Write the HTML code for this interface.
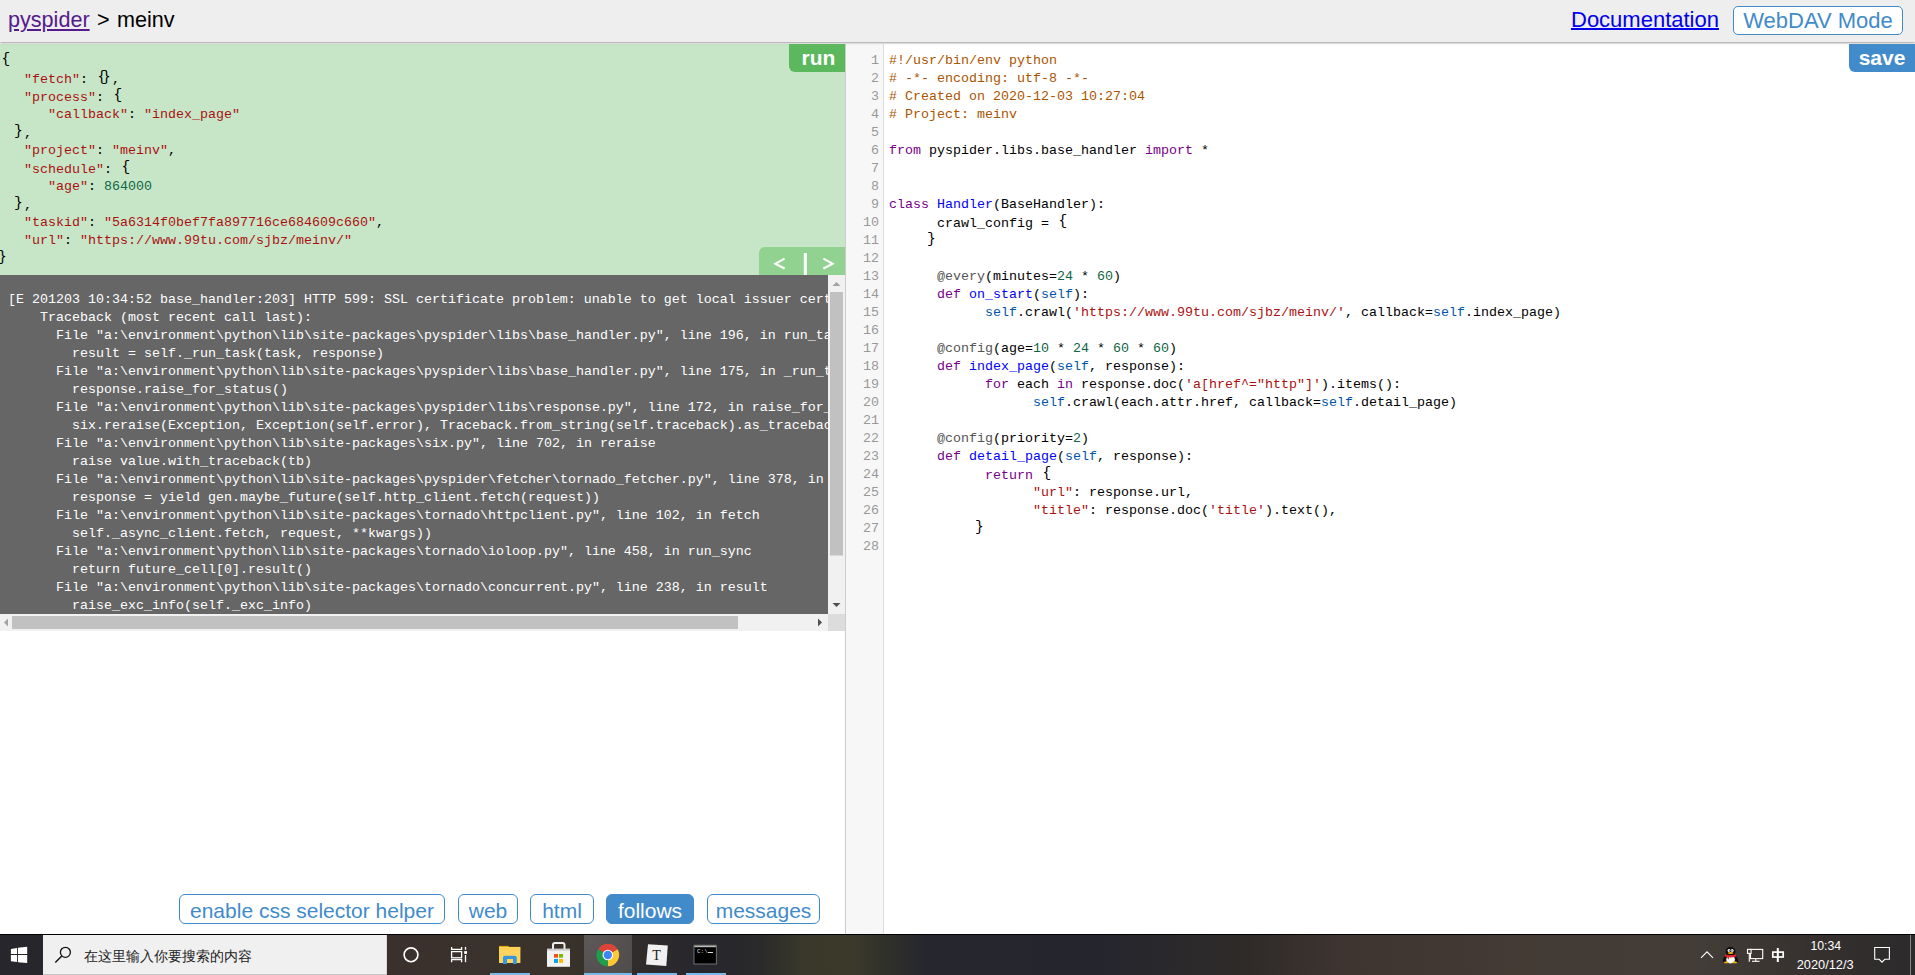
<!DOCTYPE html>
<html><head><meta charset="utf-8">
<style>
*{box-sizing:border-box}
html,body{margin:0;padding:0;width:1915px;height:975px;overflow:hidden;background:#fff;font-family:"Liberation Sans",sans-serif}
#hdr{position:absolute;left:0;top:0;width:1915px;height:42px;background:#eee;box-shadow:0 1px 2px #999;z-index:5}
#hdr .crumb{position:absolute;top:7px;font-size:21.6px;line-height:26px;color:#000;white-space:pre}
#hdr .crumb a{color:#551a8b;text-decoration:underline}
#doc{position:absolute;left:1571px;top:7px;font-size:22px;line-height:26px;color:#00e;text-decoration:underline;text-underline-offset:1px}
#webdav{position:absolute;left:1733px;top:6px;width:170px;height:29px;border:1px solid #428bca;border-radius:5px;background:#fff;color:#428bca;font-size:22px;line-height:28px;text-align:center}
#left{position:absolute;left:0;top:44px;width:845px;height:890px;background:#fff;overflow:hidden}
#task{position:absolute;left:0;top:0;width:845px;height:231px;background:#c7e6c7;overflow:hidden}
.ln{position:absolute;font-family:"Liberation Mono",monospace;font-size:13.333px;letter-spacing:0px;line-height:18px;white-space:pre;height:18px}
#run{position:absolute;right:0;top:0;width:56px;padding-left:3px;height:28px;background:#5cb85c;border-bottom-left-radius:6px;color:#fff;font-weight:bold;font-size:21px;line-height:27px;text-align:center}
#nav{position:absolute;left:759px;top:203px;width:86px;height:28px;background:#91d291;border-top-left-radius:6px;color:#fff;font-size:21px}
#log{position:absolute;left:0;top:231px;width:828px;height:339px;background:#666;color:#fff;overflow:hidden}
#vs{position:absolute;left:828px;top:231px;width:17px;height:339px;background:#f1f1f1}
#hs{position:absolute;left:0;top:570px;width:828px;height:17px;background:#f1f1f1}
#corner{position:absolute;left:828px;top:570px;width:17px;height:17px;background:#dcdcdc}
#divider{position:absolute;left:845px;top:44px;width:1px;height:890px;background:#ccc}
#right{position:absolute;left:846px;top:44px;width:1069px;height:890px;background:#fff;overflow:hidden}
#gutter{position:absolute;left:0;top:0;width:38px;height:890px;background:#f7f7f7;border-right:1px solid #ddd}
#save{position:absolute;right:0;top:0;width:66px;height:28px;background:#428bca;border-bottom-left-radius:6px;color:#fff;font-weight:bold;font-size:21px;line-height:27px;text-align:center}
#taskbar{position:absolute;left:0;top:934px;width:1915px;height:41px;background:#3b3529;border-top:1px solid #000;overflow:hidden}
.btn{position:absolute;top:894px;height:30px;border:1px solid #428bca;border-radius:6px;color:#428bca;font-size:21px;line-height:32px;text-align:center;background:#fff}
.btn.on{background:#428bca;color:#fff}
.cm{color:#a50}.kw{color:#708}.df{color:#00f}.v2{color:#05a}.st{color:#a11}.nu{color:#164}.me{color:#555}
.bo,.bc{display:inline-block;width:8px;font-size:14.5px;position:relative;top:-1.5px;text-indent:0}.bo{text-indent:1.5px}.bc{text-indent:-2px}
.gn{color:#999;text-align:right;width:33px}
</style></head><body>
<div id="hdr">
  <div class="crumb" style="left:8px"><a>pyspider</a></div><div class="crumb" style="left:97px">&gt;</div><div class="crumb" style="left:117px">meinv</div>
  <div id="doc">Documentation</div>
  <div id="webdav">WebDAV Mode</div>
</div>
<div id="left">
  <div id="task"><div class="ln" style="left:0px;top:7.5px"><span class="bo">{</span></div><div class="ln" style="left:24px;top:25.5px"><span class="st">&quot;fetch&quot;</span>: <span class="bo">{</span><span class="bc">}</span>,</div><div class="ln" style="left:24px;top:43.5px"><span class="st">&quot;process&quot;</span>: <span class="bo">{</span></div><div class="ln" style="left:48px;top:61.5px"><span class="st">&quot;callback&quot;</span>: <span class="st">&quot;index_page&quot;</span></div><div class="ln" style="left:16px;top:79.5px"><span class="bc">}</span>,</div><div class="ln" style="left:24px;top:97.5px"><span class="st">&quot;project&quot;</span>: <span class="st">&quot;meinv&quot;</span>,</div><div class="ln" style="left:24px;top:115.5px"><span class="st">&quot;schedule&quot;</span>: <span class="bo">{</span></div><div class="ln" style="left:48px;top:133.5px"><span class="st">&quot;age&quot;</span>: <span class="nu">864000</span></div><div class="ln" style="left:16px;top:151.5px"><span class="bc">}</span>,</div><div class="ln" style="left:24px;top:169.5px"><span class="st">&quot;taskid&quot;</span>: <span class="st">&quot;5a6314f0bef7fa897716ce684609c660&quot;</span>,</div><div class="ln" style="left:24px;top:187.5px"><span class="st">&quot;url&quot;</span>: <span class="st">&quot;https://www.99tu.com/sjbz/meinv/&quot;</span></div><div class="ln" style="left:0px;top:205.5px"><span class="bc">}</span></div></div>
  <div id="run">run</div>
  <div id="nav"></div>
  <svg width="845" height="240" style="position:absolute;left:0;top:0">
  <path d="M784.6,214.7 L775.3,219.8 L784.6,224.5" fill="none" stroke="#fff" stroke-width="2" stroke-linejoin="miter"/>
  <rect x="803.8" y="209" width="3" height="22" fill="#fff"/>
  <path d="M823.4,214.7 L832.7,219.8 L823.4,224.5" fill="none" stroke="#fff" stroke-width="2" stroke-linejoin="miter"/>
  </svg>
  <div id="log"><div class="ln" style="left:8px;top:15.5px">[E 201203 10:34:52 base_handler:203] HTTP 599: SSL certificate problem: unable to get local issuer certificate</div><div class="ln" style="left:40px;top:33.5px">Traceback (most recent call last):</div><div class="ln" style="left:56px;top:51.5px">File &quot;a:\environment\python\lib\site-packages\pyspider\libs\base_handler.py&quot;, line 196, in run_task</div><div class="ln" style="left:72px;top:69.5px">result = self._run_task(task, response)</div><div class="ln" style="left:56px;top:87.5px">File &quot;a:\environment\python\lib\site-packages\pyspider\libs\base_handler.py&quot;, line 175, in _run_task</div><div class="ln" style="left:72px;top:105.5px">response.raise_for_status()</div><div class="ln" style="left:56px;top:123.5px">File &quot;a:\environment\python\lib\site-packages\pyspider\libs\response.py&quot;, line 172, in raise_for_status</div><div class="ln" style="left:72px;top:141.5px">six.reraise(Exception, Exception(self.error), Traceback.from_string(self.traceback).as_traceback())</div><div class="ln" style="left:56px;top:159.5px">File &quot;a:\environment\python\lib\site-packages\six.py&quot;, line 702, in reraise</div><div class="ln" style="left:72px;top:177.5px">raise value.with_traceback(tb)</div><div class="ln" style="left:56px;top:195.5px">File &quot;a:\environment\python\lib\site-packages\pyspider\fetcher\tornado_fetcher.py&quot;, line 378, in http_fetch</div><div class="ln" style="left:72px;top:213.5px">response = yield gen.maybe_future(self.http_client.fetch(request))</div><div class="ln" style="left:56px;top:231.5px">File &quot;a:\environment\python\lib\site-packages\tornado\httpclient.py&quot;, line 102, in fetch</div><div class="ln" style="left:72px;top:249.5px">self._async_client.fetch, request, **kwargs))</div><div class="ln" style="left:56px;top:267.5px">File &quot;a:\environment\python\lib\site-packages\tornado\ioloop.py&quot;, line 458, in run_sync</div><div class="ln" style="left:72px;top:285.5px">return future_cell[0].result()</div><div class="ln" style="left:56px;top:303.5px">File &quot;a:\environment\python\lib\site-packages\tornado\concurrent.py&quot;, line 238, in result</div><div class="ln" style="left:72px;top:321.5px">raise_exc_info(self._exc_info)</div></div>
  <div id="vs">
<svg width="17" height="339" style="position:absolute;left:0;top:0">
<polygon points="4.5,11 8.5,7 12.5,11" fill="#a3a3a3"/>
<rect x="2" y="17" width="13" height="263.5" fill="#c1c1c1"/>
<polygon points="4.5,328 8.5,332 12.5,328" fill="#505050"/>
</svg></div><div id="hs">
<svg width="828" height="17" style="position:absolute;left:0;top:0">
<polygon points="8,4.5 4,8.5 8,12.5" fill="#a3a3a3"/>
<rect x="12" y="2" width="726" height="13" fill="#c1c1c1"/>
<polygon points="818,4.5 822,8.5 818,12.5" fill="#505050"/>
</svg></div><div id="corner"></div>
</div>
<div id="divider"></div>
<div id="right">
  <div id="gutter"><div class="ln gn" style="left:0px;top:7.5px">1</div><div class="ln gn" style="left:0px;top:25.5px">2</div><div class="ln gn" style="left:0px;top:43.5px">3</div><div class="ln gn" style="left:0px;top:61.5px">4</div><div class="ln gn" style="left:0px;top:79.5px">5</div><div class="ln gn" style="left:0px;top:97.5px">6</div><div class="ln gn" style="left:0px;top:115.5px">7</div><div class="ln gn" style="left:0px;top:133.5px">8</div><div class="ln gn" style="left:0px;top:151.5px">9</div><div class="ln gn" style="left:0px;top:169.5px">10</div><div class="ln gn" style="left:0px;top:187.5px">11</div><div class="ln gn" style="left:0px;top:205.5px">12</div><div class="ln gn" style="left:0px;top:223.5px">13</div><div class="ln gn" style="left:0px;top:241.5px">14</div><div class="ln gn" style="left:0px;top:259.5px">15</div><div class="ln gn" style="left:0px;top:277.5px">16</div><div class="ln gn" style="left:0px;top:295.5px">17</div><div class="ln gn" style="left:0px;top:313.5px">18</div><div class="ln gn" style="left:0px;top:331.5px">19</div><div class="ln gn" style="left:0px;top:349.5px">20</div><div class="ln gn" style="left:0px;top:367.5px">21</div><div class="ln gn" style="left:0px;top:385.5px">22</div><div class="ln gn" style="left:0px;top:403.5px">23</div><div class="ln gn" style="left:0px;top:421.5px">24</div><div class="ln gn" style="left:0px;top:439.5px">25</div><div class="ln gn" style="left:0px;top:457.5px">26</div><div class="ln gn" style="left:0px;top:475.5px">27</div><div class="ln gn" style="left:0px;top:493.5px">28</div></div>
  <div class="ln" style="left:43px;top:7.5px"><span class="cm">#!/usr/bin/env python</span></div><div class="ln" style="left:43px;top:25.5px"><span class="cm"># -*- encoding: utf-8 -*-</span></div><div class="ln" style="left:43px;top:43.5px"><span class="cm"># Created on 2020-12-03 10:27:04</span></div><div class="ln" style="left:43px;top:61.5px"><span class="cm"># Project: meinv</span></div><div class="ln" style="left:43px;top:97.5px"><span class="kw">from</span> pyspider.libs.base_handler <span class="kw">import</span> *</div><div class="ln" style="left:43px;top:151.5px"><span class="kw">class</span> <span class="df">Handler</span>(BaseHandler):</div><div class="ln" style="left:91px;top:169.5px">crawl_config = <span class="bo">{</span></div><div class="ln" style="left:83px;top:187.5px"><span class="bc">}</span></div><div class="ln" style="left:91px;top:223.5px"><span class="me">@every</span>(minutes=<span class="nu">24</span> * <span class="nu">60</span>)</div><div class="ln" style="left:91px;top:241.5px"><span class="kw">def</span> <span class="df">on_start</span>(<span class="v2">self</span>):</div><div class="ln" style="left:139px;top:259.5px"><span class="v2">self</span>.crawl(<span class="st">&#x27;https://www.99tu.com/sjbz/meinv/&#x27;</span>, callback=<span class="v2">self</span>.index_page)</div><div class="ln" style="left:91px;top:295.5px"><span class="me">@config</span>(age=<span class="nu">10</span> * <span class="nu">24</span> * <span class="nu">60</span> * <span class="nu">60</span>)</div><div class="ln" style="left:91px;top:313.5px"><span class="kw">def</span> <span class="df">index_page</span>(<span class="v2">self</span>, response):</div><div class="ln" style="left:139px;top:331.5px"><span class="kw">for</span> each <span class="kw">in</span> response.doc(<span class="st">&#x27;a[href^=&quot;http&quot;]&#x27;</span>).items():</div><div class="ln" style="left:187px;top:349.5px"><span class="v2">self</span>.crawl(each.attr.href, callback=<span class="v2">self</span>.detail_page)</div><div class="ln" style="left:91px;top:385.5px"><span class="me">@config</span>(priority=<span class="nu">2</span>)</div><div class="ln" style="left:91px;top:403.5px"><span class="kw">def</span> <span class="df">detail_page</span>(<span class="v2">self</span>, response):</div><div class="ln" style="left:139px;top:421.5px"><span class="kw">return</span> <span class="bo">{</span></div><div class="ln" style="left:187px;top:439.5px"><span class="st">&quot;url&quot;</span>: response.url,</div><div class="ln" style="left:187px;top:457.5px"><span class="st">&quot;title&quot;</span>: response.doc(<span class="st">&#x27;title&#x27;</span>).text(),</div><div class="ln" style="left:131px;top:475.5px"><span class="bc">}</span></div>
  <div id="save">save</div>
</div>
<div class="btn" style="left:179px;width:266px">enable css selector helper</div>
<div class="btn" style="left:458px;width:60px">web</div>
<div class="btn" style="left:530px;width:64px">html</div>
<div class="btn on" style="left:606px;width:88px">follows</div>
<div class="btn" style="left:707px;width:113px">messages</div>
<div id="taskbar"></div>
<svg id="tbsvg" width="1915" height="41" viewBox="0 934 1915 41" style="position:absolute;left:0;top:934px">
<defs>
<linearGradient id="tbg" x1="0" x2="1915" y1="0" y2="0" gradientUnits="userSpaceOnUse">
<stop offset="0.0000" stop-color="#26262c"/>
<stop offset="0.2021" stop-color="#3a302d"/>
<stop offset="0.2924" stop-color="#3a332b"/>
<stop offset="0.3342" stop-color="#302c2c"/>
<stop offset="0.3655" stop-color="#26262d"/>
<stop offset="0.3969" stop-color="#2a2a2b"/>
<stop offset="0.4178" stop-color="#38372a"/>
<stop offset="0.4439" stop-color="#3b3a2a"/>
<stop offset="0.4648" stop-color="#2f2f2b"/>
<stop offset="0.4856" stop-color="#25262e"/>
<stop offset="0.5744" stop-color="#25262d"/>
<stop offset="0.6527" stop-color="#2f2b29"/>
<stop offset="0.6997" stop-color="#3e3430"/>
<stop offset="0.7990" stop-color="#443b35"/>
<stop offset="0.8877" stop-color="#433d38"/>
<stop offset="0.9504" stop-color="#35302e"/>
<stop offset="1.0000" stop-color="#2c2a2b"/>
</linearGradient>
<radialGradient id="chl" cx="590" cy="940" r="60" gradientUnits="userSpaceOnUse">
<stop offset="0" stop-color="#5c5858"/><stop offset="1" stop-color="#4e4a48"/>
</radialGradient>
</defs>
<rect x="0" y="934" width="1915" height="1" fill="#000"/>
<rect x="0" y="935" width="1915" height="40" fill="url(#tbg)"/>
<rect x="0" y="935" width="43" height="40" fill="#26262c"/>
<!-- windows logo -->
<g fill="#fff">
<polygon points="10.9,948.9 17,948 17,954.1 10.9,954.1"/>
<polygon points="17.9,947.8 27.2,946.8 27.2,954.1 17.9,954.1"/>
<polygon points="10.9,954.9 17,954.9 17,962.1 10.9,961.2"/>
<polygon points="17.9,954.9 27.2,954.9 27.2,963.1 17.9,962.2"/>
</g>
<!-- search box -->
<rect x="43" y="935" width="344" height="40" fill="#f0f0f0"/>
<rect x="386" y="935" width="1" height="40" fill="#d8d8d8"/>
<rect x="43" y="974" width="344" height="1" fill="#c4c4c4"/>
<circle cx="65.4" cy="952.3" r="5" fill="none" stroke="#111" stroke-width="1.3"/>
<line x1="61.8" y1="955.9" x2="55.3" y2="962.5" stroke="#111" stroke-width="1.4"/>
<text x="83.5" y="961" font-size="14" fill="#222" font-family="Liberation Sans, sans-serif">在这里输入你要搜索的内容</text>
<!-- cortana -->
<circle cx="411" cy="954.8" r="6.9" fill="none" stroke="#fff" stroke-width="1.6"/>
<!-- task view -->
<g fill="none" stroke="#fff" stroke-width="1.3">
<path d="M451.6,946.9 V949.3 H461.6 V946.9"/>
<rect x="451.6" y="951.6" width="10" height="6.2"/>
<path d="M451.6,962.2 V959.6 H461.6 V962.2"/>
<line x1="465.5" y1="946.9" x2="465.5" y2="949.8"/>
<line x1="465.5" y1="955" x2="465.5" y2="962.2"/>
</g>
<rect x="464.2" y="951.1" width="2.8" height="2.8" fill="#fff"/>
<!-- file explorer -->
<rect x="499" y="945.9" width="9.7" height="3" fill="#e1a200"/>
<rect x="499" y="946.9" width="21.4" height="16.1" fill="#ffd45e"/>
<rect x="499" y="948.5" width="21.4" height="1" fill="#f7c948"/>
<path d="M503,964 V957.8 Q503,955.8 505,955.8 H514.8 Q516.8,955.8 516.8,957.8 V964 H513 V959 H507 V964 Z" fill="#3796dd"/>
<rect x="490" y="973" width="40" height="2" fill="#76b9ed"/>
<!-- store -->
<path d="M553,949 V945 Q553,943 555,943 H562.5 Q564.5,943 564.5,945 V949" fill="none" stroke="#eee" stroke-width="2"/>
<rect x="547" y="948.8" width="23" height="18" fill="#f2f2f2"/>
<rect x="547" y="948.8" width="23" height="2" fill="#cfcfcf"/>
<rect x="554" y="954" width="4" height="3.7" fill="#f25022"/>
<rect x="559" y="954" width="4" height="3.7" fill="#7fba00"/>
<rect x="554" y="959" width="4" height="3.9" fill="#00a4ef"/>
<rect x="559" y="959" width="4" height="3.9" fill="#ffb900"/>
<!-- chrome highlight -->
<rect x="584" y="935" width="48" height="38" fill="url(#chl)"/>
<rect x="584" y="973" width="48" height="2" fill="#76b9ed"/>
<g transform="translate(607.8,955)">
<path d="M0,0 L-9.79,-5.65 A11.3,11.3 0 0 1 9.79,-5.65 Z" fill="#db4437"/>
<path d="M0,0 L9.79,-5.65 A11.3,11.3 0 0 1 0,11.3 Z" fill="#fcc934"/>
<path d="M0,0 L0,11.3 A11.3,11.3 0 0 1 -9.79,-5.65 Z" fill="#1e9e4a"/>
<circle r="5.3" fill="#fff"/>
<circle r="4.2" fill="#4285f4"/>
</g>
<!-- typora -->
<rect x="637" y="973" width="40" height="2" fill="#76b9ed"/>
<polygon points="648,944.2 667.8,945.6 666.3,966 646,964.6" fill="#f1f1f1"/>
<text x="656.5" y="960" font-size="14" text-anchor="middle" fill="#222" font-family="Liberation Serif, serif">T</text>
<!-- cmd -->
<rect x="686" y="973" width="40" height="2" fill="#76b9ed"/>
<rect x="694" y="945.2" width="22.3" height="18.8" fill="#000" stroke="#888" stroke-width="0.8"/>
<rect x="694.4" y="945.6" width="21.5" height="1.6" fill="#bbb"/>
<text x="697" y="953" font-size="6" fill="#ddd" font-family="Liberation Mono, monospace">C:\</text>
<rect x="708" y="952" width="5" height="1" fill="#ddd"/>
<!-- tray -->
<path d="M1701,957.8 L1707,951.8 L1713,957.8" fill="none" stroke="#fff" stroke-width="1.1"/>
<g>
<ellipse cx="1724.8" cy="959.2" rx="1.6" ry="3.2" fill="#111" transform="rotate(25 1724.8 959.2)"/>
<ellipse cx="1736.2" cy="959.2" rx="1.6" ry="3.2" fill="#111" transform="rotate(-25 1736.2 959.2)"/>
<ellipse cx="1730.5" cy="951.8" rx="5" ry="5" fill="#111"/>
<ellipse cx="1730.5" cy="958.5" rx="5.8" ry="5.2" fill="#111"/>
<ellipse cx="1730.6" cy="959.6" rx="4.3" ry="3.9" fill="#fff"/>
<path d="M1725,954.2 Q1730.5,956.3 1736,954.2 L1736,956.5 Q1730.5,958.3 1725,956.5 Z" fill="#e8232b"/>
<path d="M1727,956.5 L1729.2,957.2 L1728.2,960 Z" fill="#e8232b"/>
<ellipse cx="1729" cy="950.6" rx="1.4" ry="1.5" fill="#fff"/><ellipse cx="1732.2" cy="950.6" rx="1.4" ry="1.5" fill="#fff"/>
<circle cx="1729.3" cy="950.8" r="0.6" fill="#000"/><circle cx="1731.9" cy="950.8" r="0.6" fill="#000"/>
<ellipse cx="1730.6" cy="952.9" rx="2.8" ry="1" fill="#f5b400"/>
<ellipse cx="1726.4" cy="962.4" rx="2.4" ry="0.9" fill="#f5b400"/>
<ellipse cx="1734.7" cy="962.4" rx="2.4" ry="0.9" fill="#f5b400"/>
</g>
<g fill="none" stroke="#fff" stroke-width="1.1">
<rect x="1750.5" y="949.4" width="12.2" height="9.2"/>
<rect x="1747.5" y="949.4" width="3.6" height="4" fill="#433d38"/>
<line x1="1749.3" y1="953.4" x2="1749.3" y2="961.8"/>
<line x1="1752" y1="961.3" x2="1759.6" y2="961.3"/>
<line x1="1755.8" y1="958.6" x2="1755.8" y2="961.3"/>
</g>
<g fill="none" stroke="#fff" stroke-width="1.7"><rect x="1772.8" y="952.1" width="10.4" height="4.9"/></g><rect x="1776.8" y="948" width="2" height="14" fill="#fff"/>
<text x="1825.8" y="950" font-size="12.3" text-anchor="middle" fill="#fff" font-family="Liberation Sans, sans-serif">10:34</text>
<text x="1825.2" y="969" font-size="12.8" text-anchor="middle" fill="#fff" font-family="Liberation Sans, sans-serif">2020/12/3</text>
<path d="M1874.7,947.5 H1889.4 V959.3 H1884.8 L1882,962.2 L1879.2,959.3 H1874.7 Z" fill="none" stroke="#fff" stroke-width="1.1"/>
<rect x="1910" y="935" width="1" height="40" fill="#8a8684"/>
</svg>
</body></html>
